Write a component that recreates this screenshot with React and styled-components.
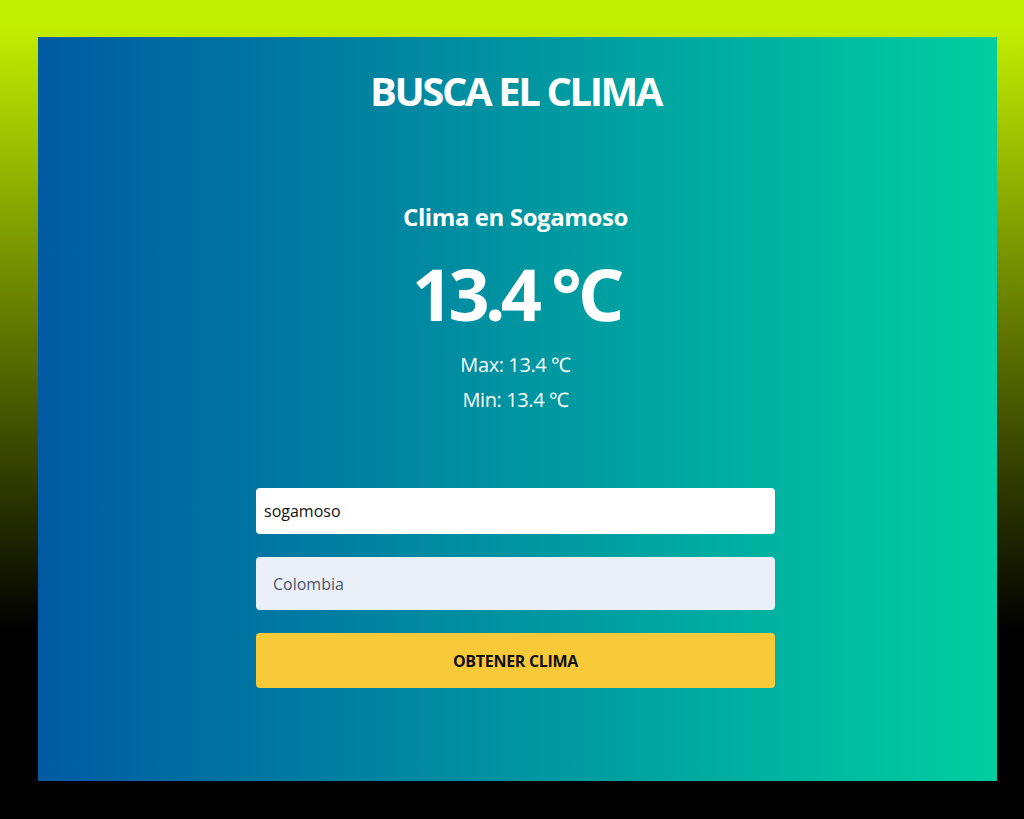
import React, { useState } from 'react'
import styled, { createGlobalStyle } from 'styled-components'

const GlobalStyle = createGlobalStyle`
  * { box-sizing: border-box; }
  html, body { margin: 0; padding: 0; }
  body {
    min-height: 819px;
    font-family: "Open Sans", "Noto Sans", sans-serif;
    background: linear-gradient(to bottom, #c3ef00 3%, #000 77%);
  }
`

const Page = styled.div`
  height: 819px;
  padding: 37px 27px 38px 38px;
  display: flex;
`

const Card = styled.main`
  flex: 1;
  display: flex;
  flex-direction: column;
  align-items: center;
  padding: 28px 4px 0 0;
  background: linear-gradient(to right, #005ba2, #00cea0);
  color: #fff;
`

const Title = styled.h1`
  margin: 0;
  font-size: 40px;
  line-height: 52px;
  font-weight: 700;
  letter-spacing: -2.4px;
`

const Weather = styled.section`
  margin-top: 84px;
  display: flex;
  flex-direction: column;
  align-items: center;
`

const City = styled.h2`
  margin: 0;
  font-size: 24px;
  line-height: 32px;
  font-weight: 700;
  letter-spacing: -0.4px;
`

const Temp = styled.p`
  margin: 18px 0 0;
  font-size: 72px;
  line-height: 84px;
  font-weight: 700;
  letter-spacing: -4.7px;
`

const Range = styled.p`
  margin: ${({ first }) => (first ? '12px' : '0')} 0 0;
  font-size: 20px;
  line-height: 35px;
  letter-spacing: -0.4px;
`

const Form = styled.form`
  margin-top: 71px;
  width: 519px;
  display: flex;
  flex-direction: column;
  gap: 23px;
`

const Input = styled.input`
  width: 100%;
  height: ${({ tall }) => (tall ? '53px' : '46px')};
  padding: 0 0 0 ${({ tall }) => (tall ? '17px' : '8px')};
  border: none;
  border-radius: 4px;
  outline: none;
  font-family: inherit;
  font-size: 16px;
  color: #111;
  background: ${({ tall }) => (tall ? '#ebf0f8' : '#fff')};

  &::placeholder {
    color: #4a5568;
  }
`

const Button = styled.button`
  height: 55px;
  border: none;
  border-radius: 4px;
  background: #f8ca3a;
  color: #111;
  font-family: inherit;
  font-size: 16px;
  font-weight: 700;
  text-transform: uppercase;
  letter-spacing: -0.3px;
  cursor: pointer;
`

export default function App() {
  const [city, setCity] = useState('sogamoso')

  return (
    <>
      <GlobalStyle />
      <Page>
        <Card>
          <Title>BUSCA EL CLIMA</Title>
          <Weather>
            <City>Clima en Sogamoso</City>
            <Temp>13.4 ℃</Temp>
            <Range first>Max: 13.4 ℃</Range>
            <Range>Min: 13.4 ℃</Range>
          </Weather>
          <Form onSubmit={e => e.preventDefault()}>
            <Input value={city} onChange={e => setCity(e.target.value)} />
            <Input tall placeholder="Colombia" />
            <Button type="submit">Obtener clima</Button>
          </Form>
        </Card>
      </Page>
    </>
  )
}
